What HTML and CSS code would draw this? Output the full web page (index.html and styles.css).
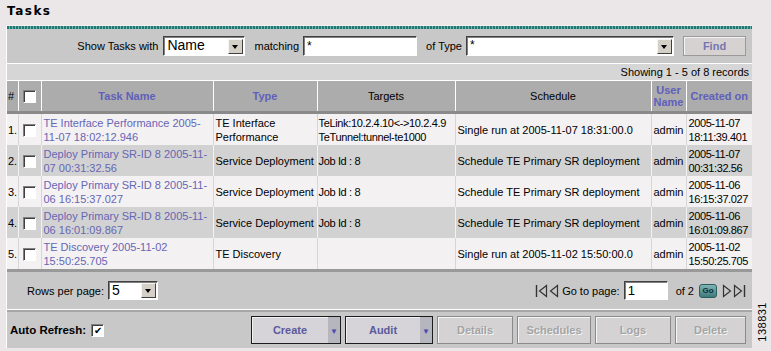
FILE: index.html
```html
<!DOCTYPE html>
<html lang="en">
<head>
    <meta charset="UTF-8">
    <title>Tasks</title>
    <link rel="stylesheet" href="styles.css">
</head>
<body>
    <h1 class="title">Tasks</h1>
    <div class="wrap">
        <div class="panel">
            <div class="rule"></div>
            <div class="search">
                <span class="label">Show Tasks with</span>
                <span class="select sel-name"><span class="val big">Name</span><span class="arrow"></span></span>
                <span class="label gap">matching</span>
                <span class="field f-match">*</span>
                <span class="label gap">of Type</span>
                <span class="select sel-type"><span class="val">*</span><span class="arrow"></span></span>
                <span class="btn find">Find</span>
            </div>
            <div class="count">Showing 1 - 5 of 8 records</div>
            <table class="tasks">
                <colgroup>
                    <col style="width:11px"><col style="width:23px"><col style="width:172px"><col style="width:104px">
                    <col style="width:138px"><col style="width:196px"><col style="width:35px"><col style="width:66px">
                </colgroup>
                <thead>
                    <tr>
                        <th class="num">#</th>
                        <th><span class="check"></span></th>
                        <th class="sort">Task Name</th>
                        <th class="sort">Type</th>
                        <th>Targets</th>
                        <th>Schedule</th>
                        <th class="sort">User<br>Name</th>
                        <th class="sort">Created on</th>
                    </tr>
                </thead>
                <tbody>
                    <tr>
                        <td class="num">1.</td>
                        <td><span class="check"></span></td>
                        <td><a href="#">TE Interface Performance 2005-<br>11-07 18:02:12.946</a></td>
                        <td>TE Interface<br>Performance</td>
                        <td class="target">TeLink:10.2.4.10&lt;-&gt;10.2.4.9<br>TeTunnel:tunnel-te1000</td>
                        <td>Single run at 2005-11-07 18:31:00.0</td>
                        <td>admin</td>
                        <td class="date">2005-11-07<br>18:11:39.401</td>
                    </tr>
                    <tr>
                        <td class="num">2.</td>
                        <td><span class="check"></span></td>
                        <td><a href="#">Deploy Primary SR-ID 8 2005-11-<br>07 00:31:32.56</a></td>
                        <td>Service Deployment</td>
                        <td class="target">Job Id : 8</td>
                        <td>Schedule TE Primary SR deployment</td>
                        <td>admin</td>
                        <td class="date">2005-11-07<br>00:31:32.56</td>
                    </tr>
                    <tr>
                        <td class="num">3.</td>
                        <td><span class="check"></span></td>
                        <td><a href="#">Deploy Primary SR-ID 8 2005-11-<br>06 16:15:37.027</a></td>
                        <td>Service Deployment</td>
                        <td class="target">Job Id : 8</td>
                        <td>Schedule TE Primary SR deployment</td>
                        <td>admin</td>
                        <td class="date">2005-11-06<br>16:15:37.027</td>
                    </tr>
                    <tr>
                        <td class="num">4.</td>
                        <td><span class="check"></span></td>
                        <td><a href="#">Deploy Primary SR-ID 8 2005-11-<br>06 16:01:09.867</a></td>
                        <td>Service Deployment</td>
                        <td class="target">Job Id : 8</td>
                        <td>Schedule TE Primary SR deployment</td>
                        <td>admin</td>
                        <td class="date">2005-11-06<br>16:01:09.867</td>
                    </tr>
                    <tr>
                        <td class="num">5.</td>
                        <td><span class="check"></span></td>
                        <td><a href="#">TE Discovery 2005-11-02<br>15:50:25.705</a></td>
                        <td>TE Discovery</td>
                        <td class="target"></td>
                        <td>Single run at 2005-11-02 15:50:00.0</td>
                        <td>admin</td>
                        <td class="date">2005-11-02<br>15:50:25.705</td>
                    </tr>
                </tbody>
            </table>
            <div class="pager">
                <div class="rows">
                    <span class="label">Rows per page:</span>
                    <span class="select sel-rows"><span class="val big">5</span><span class="arrow"></span></span>
                </div>
                <div class="nav">
                    <svg class="ico" width="13" height="14" viewBox="0 0 13 14"><path d="M1.5 1v12" stroke="#333" stroke-width="1.4"/><path d="M11.5 1.5L4.5 7l7 5.5z" fill="none" stroke="#333" stroke-width="1.2"/></svg>
                    <svg class="ico" width="10" height="14" viewBox="0 0 10 14"><path d="M8.5 1.5L1.5 7l7 5.5z" fill="none" stroke="#333" stroke-width="1.2"/></svg>
                    <span class="label">Go to page:</span>
                    <span class="field f-page">1</span>
                    <span class="label">of 2</span>
                    <span class="go">Go</span>
                    <svg class="ico" width="10" height="14" viewBox="0 0 10 14"><path d="M1.5 1.5L8.5 7l-7 5.5z" fill="none" stroke="#333" stroke-width="1.2"/></svg>
                    <svg class="ico" width="13" height="14" viewBox="0 0 13 14"><path d="M1.5 1.5L8.5 7l-7 5.5z" fill="none" stroke="#333" stroke-width="1.2"/><path d="M11.5 1v12" stroke="#333" stroke-width="1.4"/></svg>
                </div>
            </div>
            <div class="actions">
                <label class="refresh">Auto Refresh: <span class="check on">&#10004;</span></label>
                <div class="buttons">
                    <span class="btn menu b-create"><span class="txt">Create</span><span class="drop">&#9660;</span></span>
                    <span class="btn menu b-audit"><span class="txt">Audit</span><span class="drop">&#9660;</span></span>
                    <span class="btn off b-details">Details</span>
                    <span class="btn off b-sched">Schedules</span>
                    <span class="btn off b-logs">Logs</span>
                    <span class="btn off b-delete">Delete</span>
                </div>
            </div>
        </div>
        <div class="side"><span class="fig">138831</span></div>
    </div>
</body>
</html>
```

FILE: styles.css
```css
body {
    margin: 0;
    background-color: #ebe7e9;
    font-family: "Liberation Sans", Arial, sans-serif;
    font-size: 11px;
    color: #000;
}
.title {
    margin: 0;
    height: 21px;
    padding: 4px 0 0 7px;
    font: bold 12px/14px "DejaVu Sans", Verdana, sans-serif;
    letter-spacing: 1.5px;
}
.wrap {
    display: flex;
    padding-left: 6px;
}
.panel {
    width: 745px;
    border-left: 1px solid #fff;
    background-color: #c8c8c8;
}
.rule {
    height: 3px;
    border-top: 1px solid #f4f0f2;
    background: repeating-linear-gradient(90deg, #1f7a74 0 2px, #6fb3ac 2px 3px);
}
.search {
    height: 34px;
    display: flex;
    align-items: center;
    justify-content: flex-end;
    padding-right: 6px;
    border-bottom: 1px solid #fff;
}
.label {
    white-space: nowrap;
}
.gap {
    margin-left: 9px;
}
.select, .field {
    display: inline-flex;
    align-items: center;
    justify-content: space-between;
    box-sizing: border-box;
    height: 20px;
    background: #fff;
    border: 1px solid;
    border-color: #404040 #fff #fff #404040;
    box-shadow: inset 1px 1px 0 #808080;
    margin-left: 4px;
    padding: 0 1px 0 3px;
    font-size: 12px;
}
.val.big {
    font-size: 14px;
}
.val {
    align-self: flex-start;
    line-height: 16px;
}
.arrow {
    width: 15px;
    height: 15px;
    box-sizing: border-box;
    background: #d4d0c8;
    border: 1px solid;
    border-color: #f4f4f4 #404040 #404040 #f4f4f4;
    position: relative;
}
.arrow::after {
    content: "";
    position: absolute;
    left: 3px;
    top: 5px;
    border-left: 3.5px solid transparent;
    border-right: 3.5px solid transparent;
    border-top: 4px solid #000;
}
.sel-name { width: 82px; margin-left: 5px; }
.f-match { width: 114px; }
.sel-type { width: 208px; }
.btn {
    box-sizing: border-box;
    display: inline-flex;
    align-items: center;
    justify-content: center;
    font-weight: bold;
    font-size: 11px;
}
.find {
    width: 63px;
    height: 20px;
    margin-left: 9px;
    background: #d6d2d2;
    border: 1px solid #9a9a9a;
    box-shadow: inset 1px 1px 0 #f4f4f4;
    color: #7676ae;
}
.count {
    height: 16px;
    line-height: 16px;
    text-align: right;
    padding-right: 3px;
    background-color: #d6d6d6;
    border-bottom: 1px solid #fff;
}
.tasks {
    width: 745px;
    table-layout: fixed;
    border-collapse: collapse;
    border-bottom: 3px solid #999;
}
.tasks th {
    height: 30px;
    padding: 0;
    background-color: #acacac;
    border-left: 1px solid #fff;
    border-bottom: 3px solid #8a8a8a;
    font-weight: normal;
    line-height: 12px;
    text-align: center;
}
.tasks th:first-child, .tasks td:first-child {
    border-left: none;
}
.tasks th.sort {
    font-weight: bold;
    color: #6060bb;
}
.tasks th.num, .tasks td.num {
    text-align: left;
    padding-left: 1px;
}
.tasks td {
    height: 31px;
    padding: 0 2px;
    line-height: 14px;
    white-space: nowrap;
    overflow: hidden;
    border-left: 1px solid #d6d6d6;
}
.tasks tbody tr:nth-child(odd) td {
    background-color: #f4f1f3;
}
.tasks tbody tr:nth-child(even) td {
    background-color: #d2d2d2;
    border-left-color: #f2f2f2;
}
.tasks a {
    color: #6666b3;
    text-decoration: none;
}
.tasks td.date {
    letter-spacing: -0.4px;
}
.tasks td.target {
    letter-spacing: -0.35px;
    padding: 0 1px;
}
.check {
    display: inline-block;
    box-sizing: border-box;
    width: 13px;
    height: 13px;
    vertical-align: middle;
    background: #fff;
    border: 1px solid;
    border-color: #808080 #fff #fff #808080;
    box-shadow: inset 1px 1px 0 #404040;
}
.tasks td:nth-child(2), .tasks th:nth-child(2) {
    text-align: center;
}
.pager {
    height: 37px;
    display: flex;
    align-items: center;
    justify-content: space-between;
    padding: 0 6px 0 20px;
    border-bottom: 1px solid #fff;
}
.rows, .nav {
    display: flex;
    align-items: center;
}
.sel-rows { width: 50px; height: 19px; }
.nav .ico {
    margin-left: 1px;
}
.nav .label {
    margin-left: 3px;
}
.f-page {
    width: 44px;
    height: 19px;
    font-size: 13px;
    margin-right: 5px;
}
.go {
    box-sizing: border-box;
    width: 18px;
    height: 14px;
    margin: 0 4px 0 5px;
    border: 1px solid #2d5e5e;
    border-radius: 3px;
    background: linear-gradient(#7fb4b4, #3f7a7a);
    color: #0d2e2e;
    font-size: 8px;
    font-weight: bold;
    text-align: center;
    line-height: 12px;
}
.actions {
    height: 36px;
    display: flex;
    align-items: center;
    justify-content: space-between;
    padding: 0 6px 0 3px;
    border-top: 2px solid #a6a6a6;
}
.refresh {
    font-weight: bold;
    font-size: 11.5px;
    display: flex;
    align-items: center;
}
.check.on {
    margin-left: 5px;
    font-size: 10px;
    line-height: 11px;
    text-align: center;
    font-weight: normal;
}
.buttons {
    display: flex;
    gap: 4px;
}
.buttons .btn {
    height: 28px;
}
.menu {
    border: 1px solid #1c1c1c;
    background: #d6d4d8;
    box-shadow: inset 1px 1px 0 #f2f2f2;
    color: #5a5a9c;
    justify-content: space-between;
}
.menu .txt {
    flex: 1;
    text-align: center;
}
.menu .drop {
    align-self: stretch;
    width: 12px;
    background: #b6b6be;
    color: #4a4ab0;
    font-size: 8px;
    display: flex;
    align-items: center;
    justify-content: center;
    padding-top: 3px;
    box-sizing: border-box;
}
.off {
    border: 1px solid #8a8a8a;
    background: #d4d2d2;
    box-shadow: inset 1px 1px 0 #f6f6f6;
    color: #a4a4a4;
    text-shadow: 1px 1px 0 #f4f4f4;
}
.b-create { width: 90px; }
.b-audit { width: 88px; }
.b-details { width: 76px; }
.b-sched { width: 74px; }
.b-logs { width: 76px; }
.b-delete { width: 71px; }
.side {
    width: 19px;
    display: flex;
    flex-direction: column;
    justify-content: flex-end;
    align-items: center;
    padding-bottom: 6px;
    box-sizing: border-box;
}
.fig {
    writing-mode: vertical-rl;
    transform: rotate(180deg);
    font-size: 11px;
    letter-spacing: 0.5px;
}
```
